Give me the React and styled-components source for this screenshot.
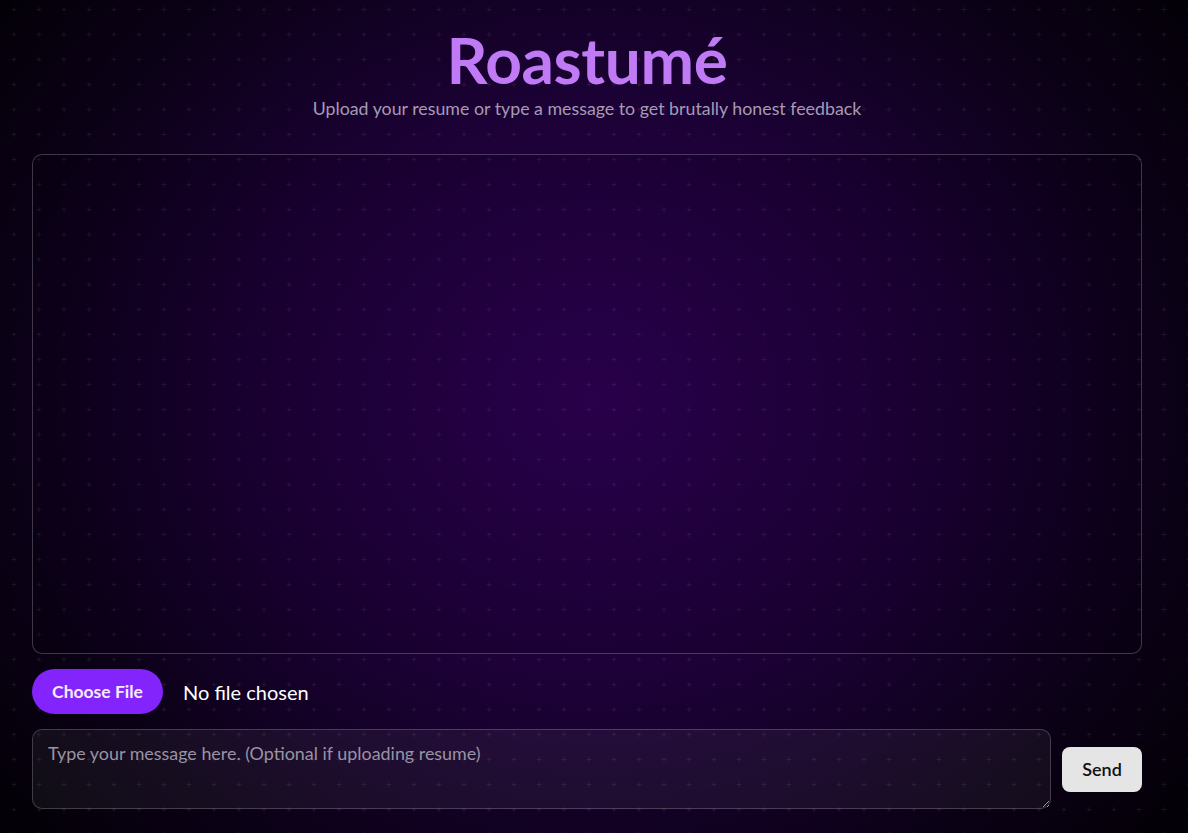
import React from 'react';
import styled, { createGlobalStyle } from 'styled-components';

const plus = encodeURIComponent(
	"<svg xmlns='http://www.w3.org/2000/svg' width='25' height='25'><path d='M14 7v5M11.5 9.5h5' stroke='rgba(255,255,255,0.06)' stroke-width='1'/></svg>"
);

const GlobalStyle = createGlobalStyle`
	html, body {
		margin: 0;
		padding: 0;
		height: 100%;
		overflow: hidden;
	}
	body {
		font-family: 'Lato', 'Open Sans', sans-serif;
		background: radial-gradient(ellipse 62% 78% at 50% 48%, #2d0152 0%, #1c0136 45%, #0b0116 80%, #040008 100%);
	}
	#root {
		min-height: 100vh;
	}
`;

const Page = styled.div`
	min-height: 100vh;
	box-sizing: border-box;
	padding: 25px 0 0 32px;
	background-image: url("data:image/svg+xml,${plus}");
	background-size: 25px 25px;
`;

const Column = styled.div`
	width: 1110px;
	display: flex;
	flex-direction: column;
`;

const Header = styled.header`
	display: flex;
	flex-direction: column;
	align-items: center;
	margin-bottom: 35px;
	h1 {
		margin: 0;
		font-size: 64px;
		line-height: 70px;
		font-weight: 700;
		color: #c07af5;
		letter-spacing: -0.4px;
	}
	p {
		margin: 2px 0 0;
		font-size: 17.8px;
		color: #a69bb5;
	}
`;

const ChatWindow = styled.div`
	height: 498px;
	border: 1px solid rgba(255, 255, 255, 0.22);
	border-radius: 10px;
	background: rgba(0, 0, 0, 0.08);
`;

const UploadRow = styled.div`
	display: flex;
	align-items: center;
	gap: 20px;
	margin-top: 15px;
	span {
		font-size: 20px;
		color: #ffffff;
	}
`;

const FileButton = styled.label`
	display: flex;
	align-items: center;
	justify-content: center;
	width: 131px;
	height: 45px;
	border-radius: 23px;
	background: #8424fc;
	color: #f4ecff;
	font-size: 17.5px;
	font-weight: 700;
	cursor: pointer;
`;

const InputRow = styled.div`
	display: flex;
	align-items: center;
	gap: 11px;
	margin-top: 15px;
`;

const MessageBox = styled.textarea`
	flex: 1;
	height: 80px;
	box-sizing: border-box;
	padding: 12px 15px;
	border: 1px solid rgba(255, 255, 255, 0.2);
	border-radius: 10px;
	background: rgba(255, 255, 255, 0.05);
	color: #ffffff;
	font-family: inherit;
	font-size: 17.9px;
	outline: none;
	&::placeholder {
		color: #9a93a3;
	}
`;

const SendButton = styled.button`
	width: 80px;
	height: 45px;
	border: none;
	border-radius: 8px;
	background: #e5e5e5;
	color: #111111;
	font-family: inherit;
	font-size: 18px;
	font-weight: 600;
	cursor: pointer;
`;

export default function App() {
	return (
		<>
			<GlobalStyle />
			<Page>
				<Column>
					<Header>
						<h1>Roastumé</h1>
						<p>Upload your resume or type a message to get brutally honest feedback</p>
					</Header>
					<ChatWindow />
					<UploadRow>
						<FileButton>Choose File</FileButton>
						<span>No file chosen</span>
					</UploadRow>
					<InputRow>
						<MessageBox placeholder="Type your message here. (Optional if uploading resume)" />
						<SendButton>Send</SendButton>
					</InputRow>
				</Column>
			</Page>
		</>
	);
}
